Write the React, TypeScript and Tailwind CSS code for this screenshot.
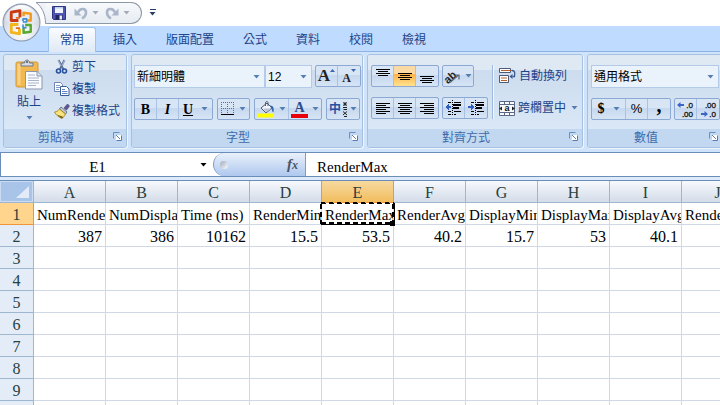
// src/App.tsx
import { useState } from 'react';
import type { ReactNode } from 'react';
import clsx from 'clsx';

const TABS = ['常用', '插入', '版面配置', '公式', '資料', '校閱', '檢視'];
const COLUMNS = ['A', 'B', 'C', 'D', 'E', 'F', 'G', 'H', 'I', 'J'];
const ROWS: string[][] = [
  ['NumRende', 'NumDispla', 'Time (ms)', 'RenderMin', 'RenderMax', 'RenderAvg', 'DisplayMin', 'DisplayMax', 'DisplayAvg', 'Render'],
  ['387', '386', '10162', '15.5', '53.5', '40.2', '15.7', '53', '40.1', ''],
  ...Array.from({ length: 8 }, () => Array(10).fill('')),
];

function Caret({ className = 'text-[#567db1]' }: { className?: string }) {
  return (
    <svg width="7" height="4" viewBox="0 0 7 4" className={clsx('shrink-0', className)} aria-hidden="true">
      <path d="M0.500 0h6L3.500 3.600z" fill="currentColor" />
    </svg>
  );
}

function OfficeLogo() {
  return (
    <svg width="39" height="39" viewBox="0 0 38 38" aria-hidden="true">
      <defs>
        <radialGradient id="orb" cx="0.5" cy="0.75" r="0.75">
          <stop offset="0" stopColor="#ffffff" />
          <stop offset="0.5" stopColor="#e3e8f0" />
          <stop offset="1" stopColor="#b3bccb" />
        </radialGradient>
        <linearGradient id="orbTop" x1="0" y1="0" x2="0" y2="1">
          <stop offset="0" stopColor="#ffffff" />
          <stop offset="1" stopColor="#e6eaf0" stopOpacity="0.4" />
        </linearGradient>
      </defs>
      <circle cx="19" cy="19" r="18" fill="url(#orb)" stroke="#8795ad" />
      <path d="M3 18a16 16 0 0 1 32 0q-16 5-32 0z" fill="url(#orbTop)" />
      <g fill="none" strokeLinejoin="round">
        <path d="M16 17H9V9l8.500-1.500V14" stroke="#c93a12" strokeWidth="2.800" />
        <path d="M21 13V9.500l7 1v6.500h-4.500" stroke="#f29a1f" strokeWidth="2.400" />
        <path d="M16 21H9v7.500l8 1.500v-5" stroke="#f3b61c" strokeWidth="2.800" />
        <path d="M22.500 21.500H28V28l-7 1v-5" stroke="#5aa832" strokeWidth="2.400" />
        <path d="M13.500 14.500h4M13.500 24.500h4" stroke="#e36a1c" strokeWidth="1.600" />
        <path d="M20.500 15.500h3.500v3h-3.500zM20.500 21v3H24" stroke="#3f8fd2" strokeWidth="1.600" />
      </g>
      <path d="M17 17.500h3v3h-3z" fill="#fff" />
    </svg>
  );
}

function SaveIcon() {
  return (
    <svg width="14" height="14" viewBox="0 0 14 14" aria-hidden="true">
      <path d="M0.500 0.500h13v13h-12l-1-1z" fill="#4f55b4" stroke="#30357f" />
      <path d="M3 1h8v6H3z" fill="#eef3fc" />
      <path d="M3 1h8v1.500H3z" fill="#bcd0ee" />
      <path d="M3.500 9h7v4.500h-7z" fill="#23265c" />
      <path d="M7.500 9.500H10v4H7.500z" fill="#e7edf8" />
    </svg>
  );
}

function UndoIcon({ flip = false }: { flip?: boolean }) {
  return (
    <svg width="14" height="14" viewBox="0 0 14 14" aria-hidden="true">
      <g transform={flip ? 'translate(14 0) scale(-1 1)' : undefined}>
        <path d="M4 6.500C6 1.500 12 2 12 6.500c0 2.500-1.500 4.500-4 6" fill="none" stroke="#a9b6c9" strokeWidth="2.600" />
        <path d="M0.500 2.500v7h7z" fill="#a9b6c9" />
      </g>
    </svg>
  );
}

function PasteIcon() {
  return (
    <svg width="28" height="31" viewBox="0 0 28 31" aria-hidden="true">
      <rect x="1" y="3" width="22" height="25" rx="1.500" fill="#f2b950" stroke="#d09a3c" />
      <path d="M2.500 5h3v21h-3z" fill="#f9d183" />
      <path d="M6 7V4h3.500c0-4 5-4 5 0H18v3z" fill="#d7dce4" stroke="#6e7787" />
      <circle cx="12" cy="3" r="1" fill="#495366" />
      <path d="M10.500 12.500h12l4.500 4.500v13H10.500z" fill="#fbfcff" stroke="#8a97ad" />
      <path d="M22 12.500V17h5" fill="#dce4f1" stroke="#8a97ad" />
      <path d="M13 16h7M13 19h11M13 21.500h11M13 24h11M13 26.500h8" stroke="#a8b4c8" />
    </svg>
  );
}

function CutIcon() {
  return (
    <svg width="14" height="16" viewBox="0 0 14 16" aria-hidden="true">
      <path d="M3.500 1l5 9.500M9.500 1L5 10" stroke="#60749b" strokeWidth="2" fill="none" />
      <path d="M3 1l3 6M10 1L7 6.500" stroke="#aebdd4" strokeWidth="1" fill="none" />
      <circle cx="3.500" cy="12" r="2" fill="none" stroke="#28529e" strokeWidth="1.600" />
      <circle cx="9.500" cy="12" r="2" fill="none" stroke="#28529e" strokeWidth="1.600" />
    </svg>
  );
}

function CopyIcon() {
  return (
    <svg width="16" height="14" viewBox="0 0 16 14" aria-hidden="true">
      <path d="M0.500 0.500h6l2 2v7h-8z" fill="#fff" stroke="#6f87b2" />
      <path d="M2 3.500h4M2 5.500h4M2 7.500h3" stroke="#7f9ccb" />
      <path d="M6.500 4.500h6l2.500 2.500v6.500H6.500z" fill="#fff" stroke="#3c5c9b" />
      <path d="M8 7.500h3M8 9.500h5.500M8 11.500h5.500" stroke="#5c84c8" />
    </svg>
  );
}

function PainterIcon() {
  return (
    <svg width="16" height="16" viewBox="0 0 16 16" aria-hidden="true">
      <path d="M10 5l3.500-4 2 2-3 4z" fill="#5d5b8e" stroke="#3c3a6b" strokeWidth="0.600" />
      <path d="M7 4l6 5-1.500 2-6-5z" fill="#c6cbd8" stroke="#545c75" strokeWidth="0.800" />
      <path d="M5.500 6l6 5c-1 2-2 3-3.500 4.500C4.500 14 2 12 0.500 9 3 8.500 4 8 5.500 6z" fill="#f3dd6b" stroke="#a08021" strokeWidth="0.800" />
      <path d="M3 9.500l4 4M5 8.500l4 4" stroke="#fff4b0" />
      <path d="M3 11.500C5 14 7 15 8 15.500l1.500-1.500z" fill="#77601a" />
    </svg>
  );
}

function Lines({ rows, top = 1 }: { rows: [number, number][]; top?: number }) {
  return (
    <svg width="14" height="16" viewBox="0 0 14 16" shapeRendering="crispEdges" aria-hidden="true">
      {rows.map(([x, w], i) => (
        <rect key={i} x={x} y={top + i * 2} width={w} height="1" fill="#000" />
      ))}
    </svg>
  );
}

function BorderIcon() {
  return (
    <svg width="14" height="14" viewBox="0 0 14 14" shapeRendering="crispEdges" aria-hidden="true">
      <path d="M0 0.500h13M0 6.500h13M0.500 0v12M6.500 0v12M12.500 0v12" stroke="#5d6f8f" strokeDasharray="1 1" fill="none" />
      <rect y="12" width="13" height="1" fill="#000" />
    </svg>
  );
}

function FillIcon() {
  return (
    <svg width="17" height="17" viewBox="0 0 17 17" aria-hidden="true">
      <path d="M3 7l6-5 5 5-6 5z" fill="#f2f5fa" stroke="#4b5874" />
      <path d="M5 7.500h8l-5 4z" fill="#b7c4da" />
      <path d="M7.500 5V2c0-2 2.500-2 2.500 0v3" fill="none" stroke="#4b5874" />
      <path d="M12 4.500c4 0 4 3 3.500 7-2-1-1-3-2.500-4.500z" fill="#3467ae" />
      <path d="M0 12.500h16v4H0z" fill="#ffff00" />
    </svg>
  );
}

function PhoneticIcon() {
  return (
    <svg width="7" height="15" viewBox="0 0 7 15" aria-hidden="true">
      <path d="M1 0.500l4 3M5 0.500l-4 3M3 0v4M1 5.500h4M1.500 7.500h3.500M1 9.500l4 3.500M5 9.500L1 13M2 14.500h3" stroke="#222" strokeWidth="1" fill="none" />
    </svg>
  );
}

function OrientIcon() {
  return (
    <svg width="17" height="16" viewBox="0 0 17 16" aria-hidden="true">
      <text x="-1" y="12" fontSize="11" fontWeight="bold" fill="#222" transform="rotate(-42 7 8)" fontFamily="Liberation Sans, sans-serif">ab</text>
      <path d="M6 14.500l8-7M15 11.500V7h-4" stroke="#59657a" strokeWidth="1.200" fill="none" />
    </svg>
  );
}

function IndentIcon({ increase = false }: { increase?: boolean }) {
  return (
    <svg width="17" height="16" viewBox="0 0 17 16" shapeRendering="crispEdges" aria-hidden="true">
      <path d="M3 2.500h3M9 2.500h7M3 11.500h3M9 11.500h7M3 14.500h3M9 14.500h2" stroke="#000" fill="none" />
      <path d="M8 5h8M8 8h6" stroke="#000" strokeWidth="2" />
      <path d="M7.500 0v15" stroke="#000" strokeDasharray="1 1" />
      <path d={increase ? 'M6 7L2.500 3.500V6H0v2h2.500v2.500z' : 'M0 7l3.500-3.500V6H6v2H3.500v2.500z'} fill="#2f5fc0" />
    </svg>
  );
}

function WrapIcon() {
  return (
    <svg width="17" height="16" viewBox="0 0 17 16" aria-hidden="true">
      <path d="M0.500 0.500h11v4H0.500zM0.500 7.500h9v7H0.500z" fill="#fff" stroke="#4d5b78" />
      <path d="M2 2.500h12M2 10h6M2 12.500h6" stroke="#b6602c" />
      <path d="M13 2.500c3 0 3 2 2.500 6h-2" fill="none" stroke="#38588e" strokeWidth="1.300" />
      <path d="M10.500 8.500l3-2.500v5z" fill="#38588e" />
    </svg>
  );
}

function MergeIcon() {
  return (
    <svg width="16" height="15" viewBox="0 0 16 15" aria-hidden="true">
      <path d="M0.500 0.500h15v14H0.500z" fill="#f7f9fd" stroke="#5a6885" />
      <path d="M0 3.500h16M0 11.500h16M5.500 0v4M10.500 0v4M5.500 11v4M10.500 11v4" stroke="#5a6885" />
      <path d="M0 7.500l3-2v4zM16 7.500l-3-2v4z" fill="#222" />
      <text x="8" y="10" fontSize="9" fontWeight="bold" textAnchor="middle" fill="#111" fontFamily="Liberation Sans, sans-serif">a</text>
    </svg>
  );
}

function DecimalIcon({ decrease = false }: { decrease?: boolean }) {
  return (
    <svg width="17" height="17" viewBox="0 0 17 17" aria-hidden="true">
      <g fontSize="8" fill="#111" stroke="#111" strokeWidth="0.300" fontFamily="Liberation Sans, sans-serif" textAnchor="end">
        <text x="16" y="7">{decrease ? '.00' : '.0'}</text>
        <text x="16" y="16">{decrease ? '.0' : '.00'}</text>
      </g>
      <path d={decrease ? 'M8 13l-3.500-3v2H1v2h3.500v2z' : 'M0 4l3.500-3v2H7v2H3.500v2z'} fill="#3c66c4" />
    </svg>
  );
}

function Group({ title, className, children }: { title: string; className: string; children: ReactNode }) {
  return (
    <section
      aria-label={title}
      className={clsx('flex h-[94px] shrink-0 flex-col overflow-hidden rounded-[3px] border border-[#a5c0e0] bg-[#d3e1f1] shadow-[1px_1px_0_#eef5fd]', className)}
    >
      <div className="flex-1 bg-linear-to-b from-[#dfe9f4] from-20% via-[#cddcee] via-20% to-[#d9e7f6]">{children}</div>
      <div className="flex h-[18px] items-center bg-[#c1d8f0] text-[#3e6aaa]">
        <span className="flex-1 text-center leading-4">{title}</span>
        <button aria-label={`${title}設定`} className="flex w-[18px] items-center justify-center pb-1">
          <svg width="9" height="9" viewBox="0 0 9 9" fill="none" aria-hidden="true">
            <path d="M0.500 6.500v-6h6" stroke="#6a8fc0" />
            <path d="M3 3h5.500v5.500H3z" fill="#fff" />
            <path d="M3 3l4 4M8.500 3.500v5h-5" stroke="#567db1" />
          </svg>
        </button>
      </div>
    </section>
  );
}

function ButtonSet({ children }: { children: ReactNode }) {
  return (
    <div className="flex h-[22px] shrink-0 divide-x divide-[#a9c2e3] overflow-hidden rounded-[2px] border border-[#8ba9d2] bg-linear-to-b from-[#d8e5f5] from-45% via-[#c6d8ef] via-45% to-[#d6e4f5]">
      {children}
    </div>
  );
}

function Tool({ label, caret, active, className = 'w-[22px]', children }: { label: string; caret?: boolean; active?: boolean; className?: string; children: ReactNode }) {
  return (
    <button
      aria-label={label}
      className={clsx('flex shrink-0 items-center justify-center gap-1 text-black', active && 'bg-linear-to-b from-[#fbd9a5] from-40% via-[#fdb04a] via-40% to-[#ffe28c]', className)}
    >
      {children}
      {caret && <Caret />}
    </button>
  );
}

function Combo({ label, value, className }: { label: string; value: string; className: string }) {
  return (
    <div className={clsx('relative h-[23px] border border-[#b3cbe8] bg-[#eaf2fb]', className)}>
      <select aria-label={label} className="h-full w-full appearance-none bg-transparent pl-0.5 text-[12px] leading-4 text-black outline-none">
        <option>{value}</option>
      </select>
      <span className="pointer-events-none absolute inset-y-0 right-1 flex items-center">
        <Caret />
      </span>
    </div>
  );
}

function Ribbon() {
  return (
    <div className="flex gap-1 overflow-hidden border-t border-[#8db2e3] bg-[#cfe3fa] pt-0.5 pb-1 pl-[3px]">
      <Group title="剪貼簿" className="w-[124px]">
        <div className="flex gap-[10px] pt-1 pl-[10px]">
          <button className="flex w-[30px] flex-col items-center">
            <PasteIcon />
            <span className="mt-1 leading-4">貼上</span>
            <Caret className="mt-1.5 text-[#567db1]" />
          </button>
          <div className="flex flex-col gap-1.5">
            <button className="flex h-4 items-center gap-0.5">
              <span className="flex w-4 justify-center"><CutIcon /></span>剪下
            </button>
            <button className="flex h-4 items-center gap-0.5">
              <CopyIcon />複製
            </button>
            <button className="flex h-4 items-center gap-0.5">
              <PainterIcon />複製格式
            </button>
          </div>
        </div>
      </Group>

      <Group title="字型" className="w-[232px]">
        <div className="flex flex-col gap-[10px] pt-[10px] pl-0.5">
          <div className="flex">
            <Combo label="字型名稱" value="新細明體" className="w-[131px]" />
            <Combo label="字型大小" value="12" className="w-[47px]" />
            <div className="pl-[3px]">
              <ButtonSet>
                <Tool label="放大字型">
                  <span className="flex items-start">
                    <b className="font-['Liberation_Serif',serif] text-[17px] leading-5 text-[#222]">A</b>
                    <svg width="5" height="7" viewBox="0 0 5 7" aria-hidden="true"><path d="M0 6l2.500-3L5 6z" fill="#3b66ad" /></svg>
                  </span>
                </Tool>
                <Tool label="縮小字型">
                  <span className="flex items-start">
                    <b className="pt-1 font-['Liberation_Serif',serif] text-[12px] leading-4 text-[#222]">A</b>
                    <svg width="5" height="7" viewBox="0 0 5 7" aria-hidden="true"><path d="M0 3l2.500 3L5 3z" fill="#3b66ad" /></svg>
                  </span>
                </Tool>
              </ButtonSet>
            </div>
          </div>
          <div className="flex gap-1 font-['Liberation_Serif','Noto_Sans_CJK_TC',serif] text-[14px]">
            <ButtonSet>
              <Tool label="粗體"><b>B</b></Tool>
              <Tool label="斜體"><b className="italic">I</b></Tool>
              <Tool label="底線" caret className="w-[33px] gap-2"><b className="underline">U</b></Tool>
            </ButtonSet>
            <ButtonSet>
              <Tool label="框線" caret className="w-[31px]"><BorderIcon /></Tool>
            </ButtonSet>
            <ButtonSet>
              <Tool label="填滿色彩" caret className="w-[34px]"><FillIcon /></Tool>
              <Tool label="字型色彩" caret className="w-[32px]">
                <b className="h-[17px] border-b-4 border-[#e8000d] px-[3px] leading-[14px] text-[#2d4b8e]">A</b>
              </Tool>
            </ButtonSet>
            <ButtonSet>
              <Tool label="注音標示" caret className="w-8 gap-px">
                <b className="text-[12px] text-[#2450a4]">中</b>
                <PhoneticIcon />
              </Tool>
            </ButtonSet>
          </div>
        </div>
      </Group>

      <Group title="對齊方式" className="w-[216px]">
        <div className="flex pt-[10px] pl-[3px]">
          <div className="flex flex-col gap-[10px]">
            <div className="flex gap-[3px]">
              <ButtonSet>
                <Tool label="靠上對齊"><Lines rows={[[0, 14], [2, 10], [0, 14], [2, 10]]} /></Tool>
                <Tool label="置中對齊" active><Lines top={5} rows={[[0, 14], [2, 10], [0, 14], [2, 10]]} /></Tool>
                <Tool label="靠下對齊"><Lines top={8} rows={[[0, 14], [2, 10], [0, 14], [2, 10]]} /></Tool>
              </ButtonSet>
              <ButtonSet>
                <Tool label="方向" caret className="w-[30px]"><OrientIcon /></Tool>
              </ButtonSet>
            </div>
            <div className="flex gap-[3px]">
              <ButtonSet>
                <Tool label="靠左對齊"><Lines top={3} rows={[[0, 14], [0, 10], [0, 14], [0, 10], [0, 14], [0, 10]]} /></Tool>
                <Tool label="水平置中"><Lines top={3} rows={[[0, 14], [2, 10], [0, 14], [2, 10], [0, 14], [2, 10]]} /></Tool>
                <Tool label="靠右對齊"><Lines top={3} rows={[[0, 14], [4, 10], [0, 14], [4, 10], [0, 14], [4, 10]]} /></Tool>
              </ButtonSet>
              <ButtonSet>
                <Tool label="減少縮排"><IndentIcon /></Tool>
                <Tool label="增加縮排"><IndentIcon increase /></Tool>
              </ButtonSet>
            </div>
          </div>
          <div className="ml-1 h-[54px] w-0.5 border-r border-l border-r-[#f0f6fd] border-l-[#9dbce0]" />
          <div className="flex flex-col gap-[10px] pl-[5px]">
            <button className="flex h-[22px] items-center gap-[3px]">
              <WrapIcon />自動換列
            </button>
            <button className="flex h-[22px] items-center gap-[3px]">
              <MergeIcon />跨欄置中<Caret className="ml-0.5 text-[#567db1]" />
            </button>
          </div>
        </div>
      </Group>

      <Group title="數值" className="w-[136px]">
        <div className="flex flex-col gap-[10px] pt-[10px] pl-[3px]">
          <Combo label="數值格式" value="通用格式" className="w-[128px]" />
          <div className="flex gap-[3px]">
            <ButtonSet>
              <Tool label="會計數字格式" caret className="w-[34px] gap-2">
                <b className="font-['Liberation_Serif',serif] text-[14px] leading-4">$</b>
              </Tool>
              <Tool label="百分比"><span className="font-['Liberation_Sans',sans-serif] text-[13px] leading-4">%</span></Tool>
              <Tool label="千分位"><b className="pb-2 font-['Liberation_Serif',serif] text-[20px] leading-4">,</b></Tool>
            </ButtonSet>
            <ButtonSet>
              <Tool label="增加小數位數"><DecimalIcon /></Tool>
              <Tool label="減少小數位數"><DecimalIcon decrease /></Tool>
            </ButtonSet>
          </div>
        </div>
      </Group>
    </div>
  );
}

// Dashed copy outline and fill handle of the selected cell
function CopyMarquee() {
  return (
    <svg width="76" height="26" viewBox="0 0 76 26" className="pointer-events-none absolute -top-0.5 -left-0.5 z-10" shapeRendering="crispEdges" aria-hidden="true">
      <path d="M1 2.500h73" stroke="#000" strokeDasharray="5 3" />
      <path d="M1 1.500h73" stroke="#000" strokeDasharray="4 4" />
      <path d="M1 3v20M73 3v17" stroke="#000" strokeWidth="2" strokeDasharray="5 3" />
      <path d="M1 22h69" stroke="#000" strokeWidth="2" strokeDasharray="5 3" />
      <path d="M1 23.500h69M74.500 2v18" stroke="#000" />
      <path d="M70 20h5v5h-5z" fill="#000" />
    </svg>
  );
}

function Sheet() {
  return (
    <table className="w-[754px] table-fixed border-separate border-spacing-0 font-['Liberation_Serif','Noto_Sans_CJK_TC',serif] text-[16px] leading-5">
      <thead>
        <tr className="text-[#27413e]">
          <th aria-label="全選" className="h-[22px] w-[34px] border-r border-b border-[#9eb6ce] bg-[#a9c4e9] p-0">
            <svg width="33" height="21" viewBox="0 0 33 21" aria-hidden="true">
              <path d="M0.500 0.500h32v20H0.500z" fill="none" stroke="#c9dcf3" />
              <path d="M29 5v12H16z" fill="#e2ebf7" />
            </svg>
          </th>
          {COLUMNS.map((col) => (
            <th
              key={col}
              scope="col"
              className={clsx(
                'h-[22px] w-[72px] border-r border-b p-0 pt-[3px] font-normal leading-[18px]',
                col === 'E' ? 'border-[#f29536] bg-linear-to-b from-[#f7d99f] to-[#f1bd5c]' : 'border-[#9eb6ce] bg-linear-to-b from-[#f7f9fc] to-[#d3dce9]',
                col === 'D' && 'border-r-[#f29536]',
              )}
            >
              {col}
            </th>
          ))}
        </tr>
      </thead>
      <tbody>
        {ROWS.map((row, r) => (
          <tr key={r}>
            <th
              scope="row"
              className={clsx(
                'h-[22px] border-r border-b p-0 pt-[3px] font-normal leading-[18px] text-[#27413e]',
                r === 0 ? 'border-[#f29536] bg-[#ffd58d]' : 'border-[#9eb6ce] bg-[#e4ecf7]',
              )}
            >
              {r + 1}
            </th>
            {row.map((value, c) => (
              <td key={c} className="relative h-[22px] border-r border-b border-[#d0d7e5] bg-white p-0 text-black">
                <div
                  className={clsx(
                    'h-[21px] overflow-hidden pt-[3px] leading-[18px] whitespace-nowrap',
                    r === 0 ? 'pl-[3px] text-[15px]' : 'pr-[3px] text-right',
                  )}
                >
                  {value}
                </div>
                {r === 0 && c === 4 && <CopyMarquee />}
              </td>
            ))}
          </tr>
        ))}
      </tbody>
    </table>
  );
}

export default function App() {
  const [tab, setTab] = useState('常用');
  const [cell, setCell] = useState('E1');
  const [formula, setFormula] = useState('RenderMax');

  return (
    <div className="relative h-screen w-full overflow-hidden bg-white font-['Liberation_Sans','Noto_Sans_CJK_TC',sans-serif] text-[12px] text-[#1d4388]">
      <header className="flex h-[26px] items-start bg-white pt-0.5 pl-9">
        <svg width="10" height="22" viewBox="0 0 10 22" className="shrink-0" aria-hidden="true">
          <path d="M0 0.500h10v21H9.500C9.500 11 5 4 0 0.500z" fill="#eff3f8" />
          <path d="M10 0.500H0C5 4 9.500 11 9.500 21.500h0.500" fill="none" stroke="#8e97a5" />
        </svg>
        <div className="flex h-[22px] w-24 items-center rounded-r-full border-y border-r border-[#8e97a5] bg-linear-to-b from-[#f7f9fb] to-[#e7ecf3] pl-1.5">
          <button aria-label="儲存檔案"><SaveIcon /></button>
          <button aria-label="復原" className="ml-2 flex items-center gap-1"><UndoIcon /><Caret className="text-[#a4a9b2]" /></button>
          <button aria-label="重做" className="ml-1.5 flex items-center gap-1"><UndoIcon flip /><Caret className="text-[#a4a9b2]" /></button>
        </div>
        <button aria-label="自訂快速存取工具列" className="mt-[7px] ml-[7px] flex flex-col items-center gap-0.5">
          <span className="h-px w-[6px] bg-[#2b3c66]" />
          <Caret className="text-[#2b3c66]" />
        </button>
      </header>
      <button aria-label="Office 按鈕" className="absolute top-[3px] left-0.5 z-10">
        <OfficeLogo />
      </button>

      <nav role="tablist" className="flex h-[25px] items-end gap-[5px] bg-[#bfdbff] pl-12">
        {TABS.map((name) => (
          <button
            key={name}
            role="tab"
            aria-selected={tab === name}
            onClick={() => setTab(name)}
            className={clsx(
              'h-6 shrink-0 rounded-t-[3px] border border-b-0 px-[11px] leading-4',
              tab === name ? '-mb-px h-[25px] border-[#9ec3ee] bg-linear-to-b from-[#fafcff] to-[#dfe9f5]' : 'border-transparent',
            )}
          >
            {name}
          </button>
        ))}
      </nav>

      <Ribbon />

      <div className="flex h-[28px] flex-col bg-[#dceafb]">
        <div className="flex h-[25px] items-stretch border-y border-[#6b8db8] bg-white font-['Liberation_Serif','Noto_Sans_CJK_TC',serif] text-[15px] text-black">
          <div className="flex w-[213px] shrink-0 items-center border-l border-[#6b8db8] pr-1.5">
            <input
              aria-label="名稱方塊"
              value={cell}
              onChange={(e) => setCell(e.target.value)}
              className="w-full min-w-0 bg-transparent pt-1 pr-1.5 text-center leading-[18px] outline-none"
            />
            <Caret className="text-black" />
          </div>
          <div className="flex w-[93px] shrink-0 items-center justify-between rounded-l-full border-r border-l border-[#7f9cc6] bg-linear-to-b from-[#eaf1fb] to-[#aec8ee] pr-[7px] pl-1.5">
            <span className="h-2 w-2 rounded-full bg-linear-to-br from-[#9fa9bb] to-white" />
            <button aria-label="插入函數" className="leading-4 font-bold text-[#4a5468] italic">
              f<span className="text-[12px]">x</span>
            </button>
          </div>
          <input
            aria-label="資料編輯列"
            value={formula}
            onChange={(e) => setFormula(e.target.value)}
            className="min-w-0 flex-1 bg-white pt-1 pl-[11px] leading-[18px] outline-none"
          />
        </div>
      </div>

      <div className="overflow-hidden border-t border-[#6b8db8]">
        <Sheet />
      </div>
    </div>
  );
}
